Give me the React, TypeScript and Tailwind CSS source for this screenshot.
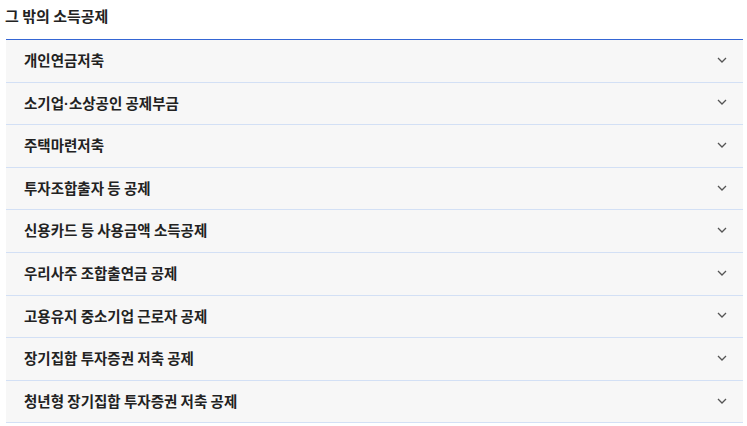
const items = [
  "개인연금저축",
  "소기업·소상공인 공제부금",
  "주택마련저축",
  "투자조합출자 등 공제",
  "신용카드 등 사용금액 소득공제",
  "우리사주 조합출연금 공제",
  "고용유지 중소기업 근로자 공제",
  "장기집합 투자증권 저축 공제",
  "청년형 장기집합 투자증권 저축 공제",
]

function Chevron() {
  return (
    <svg width="10" height="6" viewBox="0 0 10 6" fill="none" className="text-[#555]">
      <path d="M1 1l4 4 4-4" stroke="currentColor" strokeWidth="1.3" />
    </svg>
  )
}

// middle dot is narrow in the reference, CJK font draws it full width
function Label({ text }: { text: string }) {
  const parts = text.split("·")
  return (
    <span className="block h-[19.6px] font-bold">
      {parts.map((p, i) => (
        <span key={i}>
          {i > 0 && <span className="font-['Liberation_Sans',sans-serif]">·</span>}
          {p}
        </span>
      ))}
    </span>
  )
}

export default function App() {
  return (
    <div className="bg-white w-[747px] h-[426px] overflow-hidden font-['Noto_Sans_CJK_KR',sans-serif] text-[#222]">
      <div className="pl-[6px] pr-[4px]">
        {/* Title */}
        <h2 className="text-[15px] font-bold leading-[20px] pt-[6px] pb-[13px] -ml-[1px]">그 밖의 소득공제</h2>

        {/* Accordion list */}
        <ul className="border-t border-[#3566d4]">
          {items.map((label) => (
            <li key={label} className="border-b border-[#d3e0f5] bg-[#f7f7f7]">
              <button className="w-full flex items-center justify-between pl-[18px] pr-[16px] pt-[10px] pb-[12px] text-left text-[14.5px] leading-[19.6px]">
                <Label text={label} />
                <Chevron />
              </button>
            </li>
          ))}
        </ul>
      </div>
    </div>
  )
}
